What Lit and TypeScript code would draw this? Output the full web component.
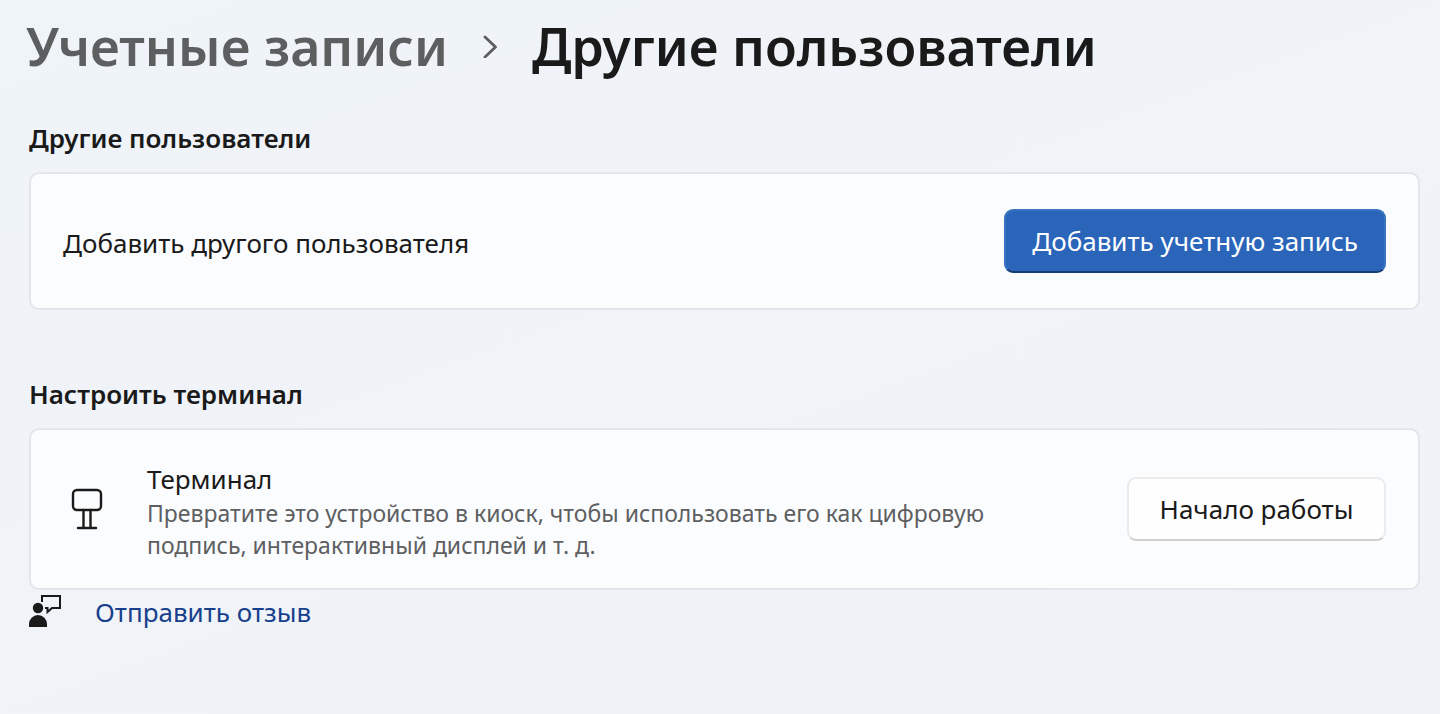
import { LitElement, html, css } from "lit";
import { customElement } from "lit/decorators.js";

@customElement("app-root")
export class AppRoot extends LitElement {
  static styles = css`
    :host {
      display: block;
      box-sizing: border-box;
      min-height: 100vh;
      padding: 6px 20px 24px 29px;
      background: linear-gradient(160deg, #eff4f9 0%, #f0f3f8 50%, #f0f2f8 100%);
      color: #1a1a1a;
      font-family: "Noto Sans", "Open Sans", sans-serif;
      font-size: 26px;
      line-height: 36px;
    }
    * {
      box-sizing: border-box;
    }
    .crumbs {
      display: flex;
      align-items: center;
      gap: 32px;
      margin-left: -3px;
      font-size: 52px;
      line-height: 80px;
      font-weight: 600;
      white-space: nowrap;
    }
    .parent {
      color: #5d5e60;
      text-decoration: none;
    }
    .chevron {
      flex: none;
      width: 20px;
      height: 24px;
    }
    h1,
    h2,
    p {
      margin: 0;
      font-size: inherit;
      font-weight: inherit;
    }
    section {
      padding-top: 34px;
    }
    section + section {
      padding-top: 66px;
    }
    h2 {
      margin-bottom: 16px;
      font-size: 26px;
      font-weight: 600;
    }
    .card {
      display: flex;
      align-items: center;
      min-height: 138px;
      padding: 26px 32px;
      border: 2px solid #e2e5ea;
      border-radius: 10px;
      background: #fbfcfe;
    }
    .tall {
      min-height: 162px;
    }
    .kiosk {
      flex: none;
      width: 50px;
      height: 44px;
      margin-right: 34px;
    }
    .text {
      flex: 1;
      min-width: 0;
      padding-top: 3px;
    }
    .text p {
      max-width: 870px;
      color: #5e5f61;
      font-size: 23px;
      line-height: 32px;
    }
    button {
      flex: none;
      height: 64px;
      min-width: 259px;
      padding: 0 26px;
      border: 2px solid #ebebec;
      border-bottom-color: #cfcfd0;
      border-radius: 9px;
      background: #fefefe;
      color: inherit;
      font: inherit;
    }
    .accent {
      border-color: #3a73c0;
      border-bottom-color: #173f75;
      background: #2a65b9;
      color: #fff;
    }
    .feedback {
      display: flex;
      align-items: center;
      gap: 32px;
      padding-top: 4px;
    }
    .feedback svg {
      flex: none;
      width: 34px;
      height: 36px;
    }
    .feedback a {
      color: #173f8c;
      text-decoration: none;
    }
  `;

  render() {
    return html`
      <nav class="crumbs">
        <a class="parent" href="#accounts">Учетные записи</a>
        <svg class="chevron" viewBox="0 0 20 24" fill="none" stroke="#5d5e60" stroke-width="2.8" stroke-linecap="round" stroke-linejoin="round" aria-hidden="true">
          <path d="M5 3 15.500 13 5 23" />
        </svg>
        <h1>Другие пользователи</h1>
      </nav>
      <main>
        <section>
          <h2>Другие пользователи</h2>
          <div class="card">
            <div class="text">Добавить другого пользователя</div>
            <button class="accent" type="button">Добавить учетную запись</button>
          </div>
        </section>
        <section>
          <h2>Настроить терминал</h2>
          <div class="card tall">
            <svg class="kiosk" viewBox="0 0 50 44" fill="none" stroke="#1a1a1a" stroke-width="2.4" stroke-linecap="round" aria-hidden="true">
              <rect x="10" y="3" width="28" height="20" rx="4" />
              <path d="M20.500 23V41M27.500 23V41M15 41H33" />
            </svg>
            <div class="text">
              Терминал
              <p>Превратите это устройство в киоск, чтобы использовать его как цифровую подпись, интерактивный дисплей и т. д.</p>
            </div>
            <button type="button">Начало работы</button>
          </div>
        </section>
        <div class="feedback">
          <svg viewBox="0 0 34 36" aria-hidden="true">
            <circle cx="9" cy="14" r="5.200" fill="#1a1a1a" />
            <path d="M0 33V30a9 9 0 0 1 18 0V33Z" fill="#1a1a1a" />
            <path d="M13 8V2H31V14H23L18.500 18V14H16" fill="none" stroke="#1a1a1a" stroke-width="2" />
          </svg>
          <a href="#feedback">Отправить отзыв</a>
        </div>
      </main>
    `;
  }
}
